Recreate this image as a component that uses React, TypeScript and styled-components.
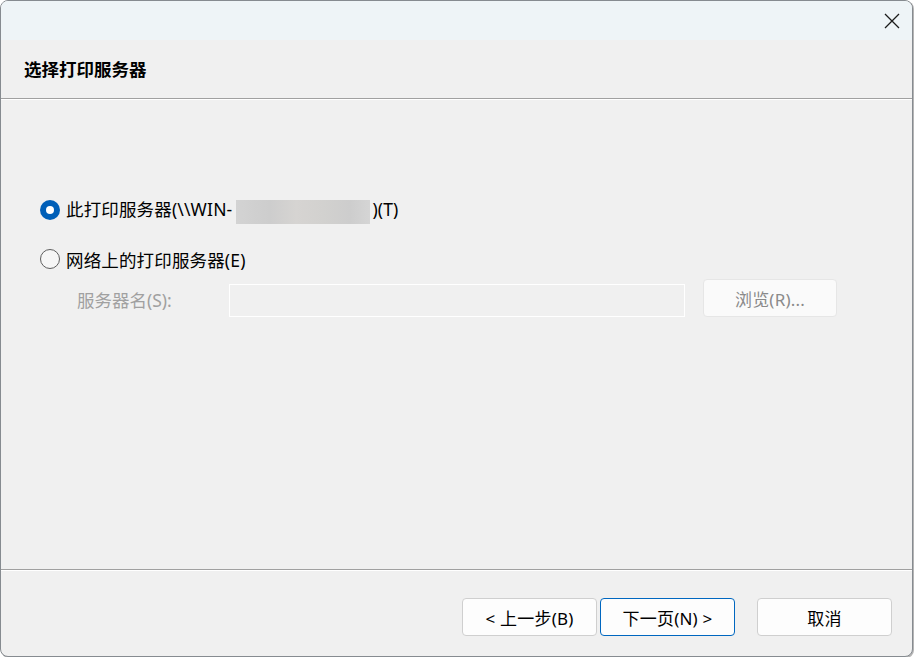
import React from "react";
import styled, { createGlobalStyle } from "styled-components";

const GlobalStyle = createGlobalStyle`
  html, body {
    margin: 0;
    padding: 0;
    background: #ffffff;
  }
  body {
    font-family: "Noto Sans", "Noto Sans CJK SC", sans-serif;
  }
`;

const Window = styled.div`
  width: 913px;
  height: 657px;
  box-sizing: border-box;
  border: 1px solid #868b90;
  border-radius: 8px;
  overflow: hidden;
  background: #f0f0f0;
  display: flex;
  flex-direction: column;
  box-shadow: 1px 1px 0 #b5b5b5;
`;

const TitleBar = styled.div`
  height: 39px;
  flex: none;
  background: #eef4f7;
  display: flex;
  justify-content: flex-end;
  align-items: center;
  padding-right: 11px;
`;

const CloseButton = styled.button`
  width: 18px;
  height: 18px;
  padding: 0;
  border: none;
  background: transparent;
  display: flex;
  align-items: center;
  justify-content: center;
  margin-top: 1px;
`;

const Header = styled.div`
  height: 58px;
  flex: none;
  display: flex;
  align-items: center;
  padding-left: 23px;
  padding-bottom: 2px;
  box-sizing: border-box;
  font-family: "Noto Sans CJK SC", sans-serif;
  font-weight: 700;
  font-size: 17.5px;
  color: #000;
`;

const Separator = styled.div`
  flex: none;
  height: 1px;
  background: #a0a0a0;
  border-bottom: 1px solid #ffffff;
`;

const Content = styled.div`
  flex: 1;
  padding: 95px 0 0 39px;
  display: flex;
  flex-direction: column;
  gap: 19px;
`;

const RadioRow = styled.label`
  height: 30px;
  display: flex;
  align-items: center;
  gap: 6px;
  font-size: 17.5px;
  letter-spacing: 0.15px;
  color: #000;
  font-family: "Noto Sans", "Noto Sans CJK SC", sans-serif;
  white-space: nowrap;
`;

const RadioDot = styled.span<{ $checked?: boolean }>`
  width: 20px;
  height: 20px;
  box-sizing: border-box;
  border-radius: 50%;
  flex: none;
  position: relative;
  background: ${(p) => (p.$checked ? "#005fb8" : "#f6f6f6")};
  border: ${(p) => (p.$checked ? "none" : "1px solid #5e5e5e")};

  &::after {
    content: "";
    display: ${(p) => (p.$checked ? "block" : "none")};
    position: absolute;
    left: 6px;
    top: 6px;
    width: 8px;
    height: 8px;
    border-radius: 50%;
    background: #ffffff;
  }
`;

const Blurred = styled.span`
  display: inline-block;
  width: 134px;
  height: 24px;
  vertical-align: middle;
  margin: 0 2px 0 4px;
  background: linear-gradient(
    90deg,
    #d3d3d3 0%,
    #cdcdcd 25%,
    #d6d4d2 45%,
    #d2d1cf 65%,
    #cdcdcd 85%,
    #d5d5d5 100%
  );
`;

const ServerRow = styled.div`
  display: flex;
  align-items: flex-start;
  margin-top: -14px;
  padding-left: 37px;
`;

const FieldLabel = styled.span`
  width: 152px;
  flex: none;
  margin-top: 5px;
  line-height: 33px;
  font-size: 17.5px;
  color: #a0a0a0;
  font-family: "Noto Sans", "Noto Sans CJK SC", sans-serif;
`;

const TextBox = styled.div`
  width: 456px;
  height: 33px;
  margin-top: 5px;
  box-sizing: border-box;
  border: 1px solid #ffffff;
  background: #f0f0f0;
  flex: none;
`;

const Button = styled.button<{ $primary?: boolean; $disabled?: boolean }>`
  width: 135px;
  height: 38px;
  box-sizing: border-box;
  flex: none;
  border-radius: 4px;
  border: 1px solid
    ${(p) => (p.$primary ? "#0067c0" : p.$disabled ? "#e6e6e6" : "#cfcfcf")};
  background: ${(p) => (p.$disabled ? "#fafafa" : "#fdfdfd")};
  color: ${(p) => (p.$disabled ? "#8a8a8a" : "#000")};
  font-family: "Noto Sans", "Noto Sans CJK SC", sans-serif;
  font-size: 17px;
  letter-spacing: 0.2px;
  padding: 0;
  display: flex;
  align-items: center;
  justify-content: center;
`;

const BrowseButton = styled(Button)`
  width: 134px;
  margin-left: 18px;
`;

const Footer = styled.div`
  height: 85px;
  flex: none;
  box-sizing: border-box;
  padding: 27px 20px 0 0;
  display: flex;
  justify-content: flex-end;
  align-items: flex-start;
`;

const ButtonGroup = styled.div`
  display: flex;
  gap: 3px;
  margin-right: 22px;
`;

const CloseIcon = () => (
  <svg width="16" height="16" viewBox="0 0 16 16">
    <path d="M1 1 L15 15 M15 1 L1 15" stroke="#1b1b1b" strokeWidth="1.3" fill="none" />
  </svg>
);

export default function App() {
  return (
    <>
      <GlobalStyle />
      <Window>
        <TitleBar>
          <CloseButton aria-label="关闭">
            <CloseIcon />
          </CloseButton>
        </TitleBar>
        <Header>选择打印服务器</Header>
        <Separator />
        <Content>
          <RadioRow>
            <RadioDot $checked />
            <span>
              此打印服务器(\\WIN-
              <Blurred />
              )(T)
            </span>
          </RadioRow>
          <RadioRow>
            <RadioDot />
            <span>网络上的打印服务器(E)</span>
          </RadioRow>
          <ServerRow>
            <FieldLabel>服务器名(S):</FieldLabel>
            <TextBox />
            <BrowseButton $disabled>浏览(R)...</BrowseButton>
          </ServerRow>
        </Content>
        <Separator />
        <Footer>
          <ButtonGroup>
            <Button>&lt; 上一步(B)</Button>
            <Button $primary>下一页(N) &gt;</Button>
          </ButtonGroup>
          <Button>取消</Button>
        </Footer>
      </Window>
    </>
  );
}
